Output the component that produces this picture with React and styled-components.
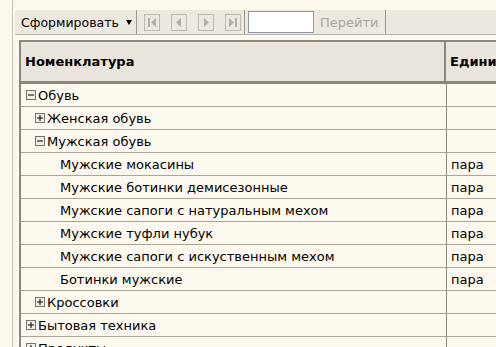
import React from 'react';
import styled, { createGlobalStyle } from 'styled-components';

const GlobalStyle = createGlobalStyle`
  html, body {
    margin: 0;
    padding: 0;
    background: #fdf9ef;
    font-family: "DejaVu Sans", Verdana, sans-serif;
    font-size: 13px;
    color: #000;
    overflow: hidden;
  }
`

const Frame = styled.div`
  margin-left: 12px;
  border-left: 1px solid #c4c0b4;
  padding: 10px 0 0 2px;
  height: 337px;
  width: 600px;
`

const Toolbar = styled.div`
  display: flex;
  align-items: stretch;
  height: 24px;
  background: #ece9e0;
  border-bottom: 1px solid #b7b3a8;
`

const MenuButton = styled.div`
  display: flex;
  align-items: center;
  gap: 7px;
  width: 115px;
  padding: 0 0 0 6px;
  font-size: 12.5px;
  border-right: 1px solid #9d998f;
`

const Caret = styled.span`
  flex: none;
  width: 0;
  height: 0;
  border-left: 3px solid transparent;
  border-right: 3px solid transparent;
  border-top: 5px solid #000;
`

const NavGroup = styled.div`
  display: flex;
  align-items: center;
  gap: 11px;
  padding: 0 3px 0 7px;
  border-right: 1px solid #9d998f;
`

const NavButton = styled.div`
  width: 14px;
  height: 15px;
  border: 1px solid #bcb8ae;
  display: flex;
  align-items: center;
  justify-content: center;
`

const PageInput = styled.div`
  align-self: center;
  width: 64px;
  height: 20px;
  margin-left: 3px;
  background: #fff;
  border: 1px solid #8d97a4;
`

const GoButton = styled.div`
  display: flex;
  align-items: center;
  padding: 0 6px 0 6px;
  color: #aaa69c;
  border-right: 1px solid #9d998f;
`

const Table = styled.div`
  margin: 5px 0 0 4px;
  border: 2px solid #8c877d;
  border-right: none;
  border-bottom: none;
  width: 620px;
`

const HeaderRow = styled.div`
  display: grid;
  grid-template-columns: 425px 1fr;
  height: 39px;
  background: #e9e5dc;
  border-bottom: 3px solid #8c877d;
`

const HeaderCell = styled.div`
  display: flex;
  align-items: center;
  padding-left: 4px;
  font-weight: bold;
  border-right: ${p => (p.$last ? 'none' : '2px solid #8c877d')};
`

const Row = styled.div`
  display: grid;
  grid-template-columns: 426px 1fr;
  height: 22px;
  border-bottom: 1px solid #a9a59a;
`

const Cell = styled.div`
  display: flex;
  align-items: center;
  padding-left: ${p => p.$indent || 4}px;
  border-right: ${p => (p.$last ? 'none' : '1px solid #8c877d')};
  white-space: nowrap;
`

const Toggle = styled.span`
  width: 10px;
  height: 10px;
  margin-right: 2px;
  display: inline-flex;
`

const NavIcon = ({ kind }) => {
  const c = '#b3afa5';
  return (
    <svg width="10" height="11" viewBox="0 0 10 11">
      {kind === 'first' && (
        <>
          <rect x="1" y="1" width="2" height="9" fill={c} />
          <polygon points="9,1 4,5.5 9,10" fill={c} />
        </>
      )}
      {kind === 'prev' && <polygon points="7,1 2,5.5 7,10" fill={c} />}
      {kind === 'next' && <polygon points="3,1 8,5.5 3,10" fill={c} />}
      {kind === 'last' && (
        <>
          <polygon points="1,1 6,5.5 1,10" fill={c} />
          <rect x="7" y="1" width="2" height="9" fill={c} />
        </>
      )}
    </svg>
  );
};

const TreeToggle = ({ open }) => (
  <Toggle>
    <svg width="10" height="10" viewBox="0 0 10 10">
      <rect x="0.5" y="0.5" width="9" height="9" fill="#f2efe8" stroke="#77736b" />
      <line x1="2" y1="5" x2="8" y2="5" stroke="#000" />
      {!open && <line x1="5" y1="2" x2="5" y2="8" stroke="#000" />}
    </svg>
  </Toggle>
);

const rows = [
  { name: 'Обувь', level: 0, toggle: 'open' },
  { name: 'Женская обувь', level: 1, toggle: 'closed' },
  { name: 'Мужская обувь', level: 1, toggle: 'open' },
  { name: 'Мужские мокасины', level: 2, unit: 'пара' },
  { name: 'Мужские ботинки демисезонные', level: 2, unit: 'пара' },
  { name: 'Мужские сапоги с натуральным мехом', level: 2, unit: 'пара' },
  { name: 'Мужские туфли нубук', level: 2, unit: 'пара' },
  { name: 'Мужские сапоги с искуственным мехом', level: 2, unit: 'пара' },
  { name: 'Ботинки мужские', level: 2, unit: 'пара' },
  { name: 'Кроссовки', level: 1, toggle: 'closed' },
  { name: 'Бытовая техника', level: 0, toggle: 'closed' },
  { name: 'Продукты', level: 0, toggle: 'closed' },
];

const indentFor = r => (r.level === 0 ? 5 : r.level === 1 ? 14 : 39);

export default function App() {
  return (
    <>
      <GlobalStyle />
      <Frame>
        <Toolbar>
          <MenuButton>
            <span>Сформировать</span>
            <Caret />
          </MenuButton>
          <NavGroup>
            <NavButton><NavIcon kind="first" /></NavButton>
            <NavButton><NavIcon kind="prev" /></NavButton>
            <NavButton><NavIcon kind="next" /></NavButton>
            <NavButton><NavIcon kind="last" /></NavButton>
          </NavGroup>
          <PageInput />
          <GoButton>Перейти</GoButton>
        </Toolbar>
        <Table>
          <HeaderRow>
            <HeaderCell>Номенклатура</HeaderCell>
            <HeaderCell $last>Единица</HeaderCell>
          </HeaderRow>
          {rows.map(r => (
            <Row key={r.name}>
              <Cell $indent={indentFor(r)}>
                {r.toggle && <TreeToggle open={r.toggle === 'open'} />}
                {r.name}
              </Cell>
              <Cell $last>{r.unit}</Cell>
            </Row>
          ))}
        </Table>
      </Frame>
    </>
  );
}
